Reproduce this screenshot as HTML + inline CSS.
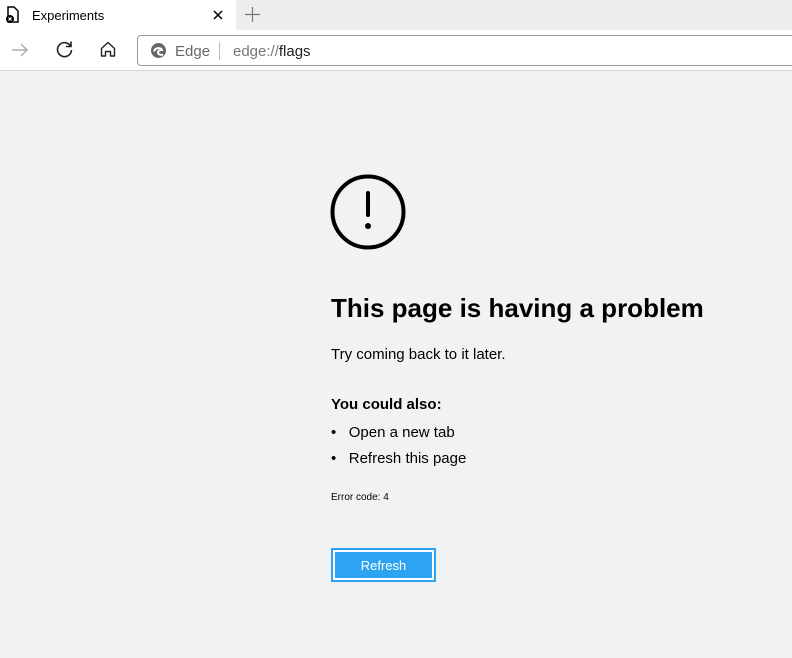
<!DOCTYPE html>
<html><head><meta charset="utf-8"><style>
*{margin:0;padding:0;box-sizing:border-box}
body{width:792px;height:658px;overflow:hidden;background:#f1f2f4;font-family:"Liberation Sans",sans-serif;color:#000;position:relative}
.tabs{position:absolute;left:0;top:0;width:792px;height:30px;background:#eeeeee}
.tab{position:absolute;left:0;top:0;width:236px;height:30px;background:#fff}
.toolbar{position:absolute;left:0;top:30px;width:792px;height:41px;background:#fff;border-bottom:1px solid #d6d6d6}
.addr{position:absolute;left:137px;top:5px;width:660px;height:31px;border:1px solid #9a9a9a;border-radius:4px;background:#fff}
.abs{position:absolute}
</style></head><body>
<div class="tabs">
<div class="tab">
<svg class="abs" style="left:5px;top:6px" width="16" height="18" viewBox="0 0 16 18"><path d="M3 1h6l4 4v11H3z" fill="none" stroke="#000" stroke-width="1.5"/><circle cx="5" cy="13" r="4" fill="#000"/><path d="M3.5 11.5l3 3M6.5 11.5l-3 3" stroke="#fff" stroke-width="1.2"/></svg>
<div class="abs" style="left:32px;top:8px;font-size:13px">Experiments</div>
<svg class="abs" style="left:213px;top:10px" width="10" height="10"><path d="M1 1l8 8M9 1l-8 8" stroke="#000" stroke-width="1.5"/></svg>
</div>
<svg class="abs" style="left:245px;top:7px" width="15" height="15"><path d="M7.5 0v15M0 7.5h15" stroke="#777" stroke-width="1.2"/></svg>
</div>
<div class="toolbar">
<svg class="abs" style="left:11px;top:12px" width="18" height="16"><path d="M1 8h15M10 2l6 6-6 6" fill="none" stroke="#aaa" stroke-width="1.4"/></svg>
<svg class="abs" style="left:55px;top:10px" width="19" height="19" viewBox="0 0 19 19"><path d="M15.5 6A7 7 0 1 0 16.5 10" fill="none" stroke="#222" stroke-width="1.6"/><path d="M16 1.5v5h-5" fill="none" stroke="#222" stroke-width="1.6"/></svg>
<svg class="abs" style="left:100px;top:11px" width="16" height="16" viewBox="0 0 16 16"><path d="M1.5 7.5L8 1.5l6.5 6V15h-4v-4.5h-5V15h-4z" fill="none" stroke="#222" stroke-width="1.4" stroke-linejoin="round"/></svg>
<div class="addr">
<svg class="abs" style="left:12px;top:6px" width="17" height="17" viewBox="0 0 17 17"><circle cx="8.5" cy="8.5" r="7.5" fill="#666"/><path d="M4 9.5c1-4 7-4.5 8-1.5-2 0-4 .5-4 2.5 0 2 3 3 5 2" fill="none" stroke="#fff" stroke-width="2"/></svg>
<div class="abs" style="left:37px;top:7px;font-size:15px;color:#666">Edge</div>
<div class="abs" style="left:81px;top:6px;width:1px;height:18px;background:#bbb"></div>
<div class="abs" style="left:95px;top:7px;font-size:15px;color:#777">edge://<span style="color:#222">flags</span></div>
</div>
</div>
<svg class="abs" style="left:329px;top:173px" width="78" height="78"><circle cx="39" cy="39" r="35.5" fill="none" stroke="#000" stroke-width="4"/><path d="M39 20v22" stroke="#000" stroke-width="4" stroke-linecap="round"/><circle cx="39" cy="53" r="3" fill="#000"/></svg>
<div class="abs" style="left:331px;top:293px;font-size:26px;font-weight:bold;white-space:nowrap">This page is having a problem</div>
<div class="abs" style="left:331px;top:346px;font-size:15px">Try coming back to it later.</div>
<div class="abs" style="left:331px;top:396px;font-size:15px;font-weight:bold">You could also:</div>
<div class="abs" style="left:331px;top:424px;font-size:15px">•&nbsp;&nbsp;&nbsp;Open a new tab</div>
<div class="abs" style="left:331px;top:450px;font-size:15px">•&nbsp;&nbsp;&nbsp;Refresh this page</div>
<div class="abs" style="left:331px;top:492px;font-size:10px">Error code: 4</div>
<div class="abs" style="left:331px;top:548px;width:105px;height:34px;border:2px solid #2ea3f2;padding:2px;background:#fff"><div style="width:100%;height:100%;background:#2ea3f2;color:#fff;font-size:13px;text-align:center;line-height:27px">Refresh</div></div>
</body></html>
